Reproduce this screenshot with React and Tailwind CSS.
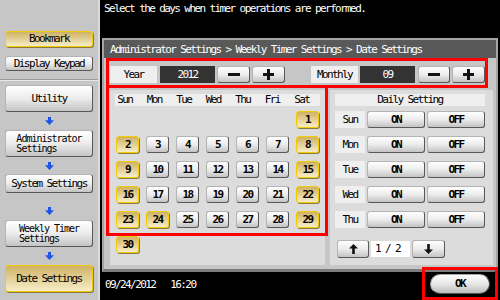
import React from "react";

function GrayBtn({ className = "", children }) {
  return (
    <div
      className={
        "flex items-center justify-center rounded-[3px] border border-[#b4b4b4] border-r-[#585858] border-b-[#585858] bg-linear-to-b from-[#ffffff] via-[#ececec] to-[#c4c4c4] text-black " +
        className
      }
    >
      {children}
    </div>
  );
}

function YellowBtn({ className = "", children }) {
  return (
    <div
      className={
        "flex items-center justify-center rounded-[3px] border-[1.5px] border-[#f2cc00] bg-linear-to-b from-[#cfb264] to-[#f6edc8] text-black shadow-[1px_1px_0_#8a7a40] " +
        className
      }
    >
      {children}
    </div>
  );
}

function BlueArrow() {
  return (
    <svg width="9" height="8" viewBox="0 0 9 8">
      <path d="M3 0h3v3.2h3L4.5 8 0 3.2h3z" fill="#1d55e6" />
    </svg>
  );
}

function Minus() {
  return (
    <svg width="12" height="3" viewBox="0 0 12 3">
      <rect width="12" height="3" fill="#111" />
    </svg>
  );
}

function Plus() {
  return (
    <svg width="11" height="11" viewBox="0 0 11 11">
      <rect x="0" y="4" width="11" height="3" fill="#111" />
      <rect x="4" y="0" width="3" height="11" fill="#111" />
    </svg>
  );
}

function ArrowUp() {
  return (
    <svg width="9" height="10" viewBox="0 0 9 10">
      <path d="M4.5 0L9 4.6H5.8V10H3.2V4.6H0z" fill="#111" />
    </svg>
  );
}

function ArrowDown() {
  return (
    <svg width="9" height="10" viewBox="0 0 9 10">
      <path d="M4.5 10L9 5.4H5.8V0H3.2V5.4H0z" fill="#111" />
    </svg>
  );
}

const weeks = [
  [null, null, null, null, null, null, 1],
  [2, 3, 4, 5, 6, 7, 8],
  [9, 10, 11, 12, 13, 14, 15],
  [16, 17, 18, 19, 20, 21, 22],
  [23, 24, 25, 26, 27, 28, 29],
  [30, null, null, null, null, null, null],
];
const yellowDays = [1, 2, 8, 9, 15, 16, 22, 23, 24, 29, 30];

export default function App() {
  return (
    <div className="relative w-[500px] h-[300px] flex bg-black overflow-hidden font-['DejaVu_Sans_Mono',monospace] text-[11px] tracking-[-1.6px] leading-[12px] text-black">
      {/* Sidebar */}
      <div className="w-[100px] h-full shrink-0 bg-[#c6c6c6] border-r-2 border-[#dcdcdc] flex flex-col">
        <div className="h-[80px] shrink-0 border-b border-[#9a9a9a] flex flex-col px-[5px] pt-[31px] gap-[9px]">
          <YellowBtn className="h-[16px]">Bookmark</YellowBtn>
          <GrayBtn className="h-[15px]">Display Keypad</GrayBtn>
        </div>
        <div className="flex-1 border-t border-[#e8e8e8] flex flex-col px-[5px] pt-[4px]">
          <GrayBtn className="h-[27px]">Utility</GrayBtn>
          <div className="h-[18px] flex items-center justify-center">
            <BlueArrow />
          </div>
          <GrayBtn className="h-[27px]">
            <div className="flex flex-col text-left text-[10px] tracking-[-1px] leading-[10px]">
              <span>Administrator</span>
              <span>Settings</span>
            </div>
          </GrayBtn>
          <div className="h-[17px] flex items-center justify-center">
            <BlueArrow />
          </div>
          <GrayBtn className="h-[19px]">System Settings</GrayBtn>
          <div className="h-[27px] flex items-center justify-center pt-[9px]">
            <BlueArrow />
          </div>
          <GrayBtn className="h-[27px]">
            <div className="flex flex-col text-left text-[10px] tracking-[-1px] leading-[10px]">
              <span>Weekly Timer</span>
              <span>Settings</span>
            </div>
          </GrayBtn>
          <div className="h-[18px] flex items-center justify-center">
            <BlueArrow />
          </div>
          <YellowBtn className="h-[27px]">Date Settings</YellowBtn>
        </div>
      </div>

      {/* Main */}
      <div className="flex-1 flex flex-col">
        <div className="h-[38px] shrink-0 pl-[4px] pt-[3px] text-white">
          Select the days when timer operations are performed.
        </div>

        <div className="mx-[2px] h-[234px] shrink-0 border-2 border-[#a4a4a4] border-b-[3px] border-b-[#7c7c7c] bg-[#c6c6c6] flex flex-col">
          <div className="h-[18px] shrink-0 bg-[#595959] text-white pl-[6px] pt-[2px] flex items-center">
            Administrator Settings &gt; Weekly Timer Settings &gt; Date Settings
          </div>
          <div className="flex-1 flex flex-col">
            {/* Year / Month row */}
            <div className="mt-[8px] h-[17px] pl-[6px] flex">
              <div className="w-[47px] h-[17px] bg-[#efefef] flex items-center justify-center">Year</div>
              <div className="ml-[3px] w-[55px] h-[17px] bg-[#333333] text-white flex items-center justify-center">2012</div>
              <GrayBtn className="ml-[2px] w-[33px] h-[17px]">
                <Minus />
              </GrayBtn>
              <GrayBtn className="ml-[2px] w-[33px] h-[17px]">
                <Plus />
              </GrayBtn>
              <div className="ml-[26px] w-[47px] h-[17px] bg-[#efefef] flex items-center justify-center">Monthly</div>
              <div className="ml-[2px] w-[55px] h-[17px] bg-[#333333] text-white flex items-center justify-center">09</div>
              <GrayBtn className="ml-[3px] w-[32px] h-[17px]">
                <Minus />
              </GrayBtn>
              <GrayBtn className="ml-[2px] w-[33px] h-[17px]">
                <Plus />
              </GrayBtn>
            </div>

            {/* Sections */}
            <div className="mt-[7px] pl-[6px] flex gap-[5px]">
              {/* Calendar */}
              <div className="w-[215px] h-[175px] bg-[#dcdcdc] pt-[4px]">
                <div className="ml-[5px] w-[205px] h-[12px] bg-[#efefef]">
                  <div className="-ml-[5px] grid grid-cols-[repeat(7,29.5px)] leading-[12px]">
                    {["Sun", "Mon", "Tue", "Wed", "Thu", "Fri", "Sat"].map((d) => (
                      <div key={d} className="text-center">
                        {d}
                      </div>
                    ))}
                  </div>
                </div>
                <div className="mt-[5px] pl-[6px] grid grid-cols-[repeat(7,23px)] auto-rows-[17px] gap-x-[7px] gap-y-[8px] font-bold">
                  {weeks.flat().map((d, i) =>
                    d === null ? (
                      <div key={i} />
                    ) : yellowDays.includes(d) ? (
                      <YellowBtn key={i} className="h-[17px]">
                        {d}
                      </YellowBtn>
                    ) : (
                      <GrayBtn key={i} className="h-[17px]">
                        {d}
                      </GrayBtn>
                    )
                  )}
                </div>
              </div>

              {/* Daily Setting */}
              <div className="w-[163px] h-[175px] bg-[#dcdcdc] pt-[4px]">
                <div className="ml-[5px] w-[150px] h-[12px] bg-[#efefef] flex items-center justify-center">
                  Daily Setting
                </div>
                <div className="mt-[5px] flex flex-col gap-[8px]">
                  {["Sun", "Mon", "Tue", "Wed", "Thu"].map((d) => (
                    <div key={d} className="ml-[5px] flex h-[17px]">
                      <div className="w-[30px] h-[17px] bg-[#efefef] flex items-center justify-center">{d}</div>
                      <GrayBtn className="ml-[2px] w-[58px] h-[17px] font-bold">ON</GrayBtn>
                      <GrayBtn className="ml-[2px] w-[58px] h-[17px] font-bold">OFF</GrayBtn>
                    </div>
                  ))}
                </div>
                <div className="mt-[12px] ml-[7px] flex items-center">
                  <GrayBtn className="w-[32px] h-[18px]">
                    <ArrowUp />
                  </GrayBtn>
                  <div className="ml-[2px] w-[39px] h-[16px] bg-white flex items-center pl-[4px]">1 / 2</div>
                  <GrayBtn className="ml-[2px] w-[33px] h-[18px]">
                    <ArrowDown />
                  </GrayBtn>
                </div>
              </div>
            </div>
          </div>
        </div>

        {/* Bottom strip */}
        <div className="flex-1 flex">
          <div className="pl-[5px] pt-[7px] text-white whitespace-pre">09/24/2012   16:20</div>
          <div className="ml-auto mr-[10px] mt-[2px] w-[60px] h-[20px] rounded-full border border-[#a8a8a8] border-r-[#555] border-b-[#555] bg-linear-to-b from-[#ffffff] via-[#e6e6e6] to-[#bdbdbd] flex items-center justify-center font-bold">
            OK
          </div>
        </div>
      </div>

      {/* Red annotation boxes */}
      <div className="absolute left-[106px] top-[58px] w-[382px] h-[30px] border-[3px] border-[#ff0000] pointer-events-none" />
      <div className="absolute left-[106px] top-[85px] w-[222px] h-[151px] border-[3px] border-[#ff0000] pointer-events-none" />
      <div className="absolute left-[422px] top-[267px] w-[76px] h-[33px] border-[3px] border-[#ff0000] pointer-events-none" />
    </div>
  );
}
